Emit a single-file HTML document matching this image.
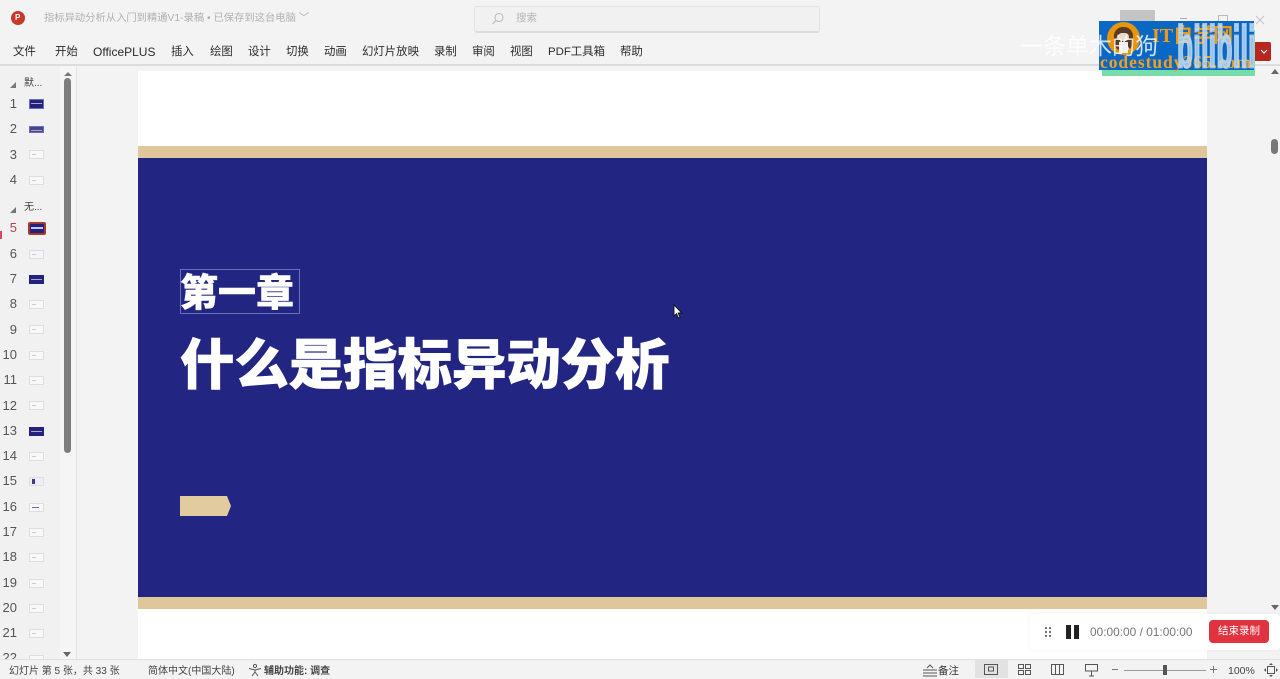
<!DOCTYPE html>
<html lang="zh">
<head>
<meta charset="utf-8">
<style>
html,body{margin:0;padding:0;width:1280px;height:678px;overflow:hidden;background:#f3f3f3;font-family:"Liberation Sans","Noto Sans CJK SC",sans-serif;color:#333}
.a{position:absolute;white-space:nowrap}
.m{position:absolute;top:45px;font-size:11.4px;line-height:15px;color:#2b2b2b;white-space:nowrap}
.n{position:absolute;width:20px;text-align:right;left:-3px;font-size:13px;line-height:16px;color:#555}
.t{position:absolute;left:29px;width:15px;height:9px;background:#f8f8f8;border:1px solid #dedede;box-sizing:border-box}
.d{background:#23237f;border-color:#6c6cc0}
.t i{position:absolute;left:2px;top:3px;width:4px;height:1px;background:#ccc}
.d i{left:1px;width:11px;background:#aab}
.tri{position:absolute;left:10px;width:0;height:0;border-left:6px solid transparent;border-bottom:6px solid #777}
</style>
</head>
<body>
<div class="a" style="left:0;top:0;width:1280px;height:678px;background:#f3f3f3"></div>

<!-- title bar -->
<div class="a" style="left:11px;top:11px;width:14px;height:14px;border-radius:50%;background:#c8392b"></div>
<div class="a" style="left:15px;top:13px;font-size:8px;line-height:10px;font-weight:bold;color:#fff">P</div>
<div class="a" style="left:44px;top:11px;font-size:10.3px;line-height:15px;color:#b0b0b0">指标异动分析从入门到精通V1-录稿 • 已保存到这台电脑 ﹀</div>
<div class="a" style="left:474px;top:6px;width:346px;height:27px;box-sizing:border-box;background:#f1f1f1;border:1px solid #e2e2e2;border-bottom:2px solid #dcdcdc;border-radius:3px"></div>
<svg class="a" style="left:490px;top:11px" width="16" height="16" viewBox="0 0 16 16"><circle cx="9" cy="6.500" r="4" fill="none" stroke="#bbb" stroke-width="1.100"/><path d="M6 9.500L2.500 13" stroke="#bbb" stroke-width="1.200"/></svg>
<div class="a" style="left:516px;top:11px;font-size:10.500px;line-height:15px;color:#b4b4b4">搜索</div>
<div class="a" style="left:1120px;top:10px;width:35px;height:11px;background:#c4c4c4"></div>
<div class="a" style="left:1180px;top:18px;width:7px;height:1px;background:#aaa"></div>
<div class="a" style="left:1218px;top:15px;width:8px;height:7px;border:1px solid #bbb"></div>
<svg class="a" style="left:1254px;top:14px" width="12" height="12" viewBox="0 0 12 12"><path d="M2 2L10 10M10 2L2 10" stroke="#c4c4c4" stroke-width="1"/></svg>

<!-- menu -->
<div class="m" style="left:13px">文件</div>
<div class="m" style="left:55px">开始</div>
<div class="m" style="left:93px;font-size:12px">OfficePLUS</div>
<div class="m" style="left:171px">插入</div>
<div class="m" style="left:210px">绘图</div>
<div class="m" style="left:248px">设计</div>
<div class="m" style="left:286px">切换</div>
<div class="m" style="left:324px">动画</div>
<div class="m" style="left:362px">幻灯片放映</div>
<div class="m" style="left:434px">录制</div>
<div class="m" style="left:472px">审阅</div>
<div class="m" style="left:510px">视图</div>
<div class="m" style="left:548px">PDF工具箱</div>
<div class="m" style="left:620px">帮助</div>
<div class="a" style="left:0;top:64px;width:1280px;height:2px;background:#dcdcdc"></div>

<!-- thumbnail panel -->
<div class="a" style="left:0;top:66px;width:60px;height:593px;background:#f1f1f1"></div>
<div class="a" style="left:60px;top:66px;width:16px;height:593px;background:#f5f5f5"></div>
<div class="a" style="left:76px;top:66px;width:1px;height:593px;background:#e4e4e4"></div>
<div class="a" style="left:64px;top:78px;width:7px;height:375px;border-radius:4px;background:#7d7d7d"></div>
<div class="a" style="left:64px;top:72px;width:0;height:0;border-left:4px solid transparent;border-right:4px solid transparent;border-bottom:4px solid #777"></div>
<div class="a" style="left:63px;top:652px;width:0;height:0;border-left:4px solid transparent;border-right:4px solid transparent;border-top:5px solid #666"></div>

<div class="tri" style="top:82px"></div>
<div class="a" style="left:24px;top:77px;font-size:10px;line-height:14px;color:#444">默...</div>
<div class="tri" style="top:207px"></div>
<div class="a" style="left:24px;top:201px;font-size:10px;line-height:14px;color:#444">无...</div>

<div class="n" style="top:96px">1</div><div class="t d" style="top:99px;height:10px"><i></i></div>
<div class="n" style="top:121px">2</div><div class="t d" style="top:126px;height:7px;background:#45458c"><i></i></div>
<div class="n" style="top:147px">3</div><div class="t" style="top:150px"><i></i></div>
<div class="n" style="top:172px">4</div><div class="t" style="top:176px"><i></i></div>
<div class="n" style="top:220px;color:#b5404a">5</div>
<div class="a" style="left:28px;top:222px;width:18px;height:13px;box-sizing:border-box;border:2px solid #a83a2c;border-radius:2px;background:#23237f"></div>
<div class="a" style="left:31px;top:227px;width:12px;height:2px;background:#c8c8ee"></div>
<div class="a" style="left:0;top:231px;width:2px;height:8px;background:#d84a5a"></div>
<div class="n" style="top:246px">6</div><div class="t" style="top:250px;background:#f4f4fb"><i></i></div>
<div class="n" style="top:271px">7</div><div class="t d" style="top:275px;border-color:#23237f"><i></i></div>
<div class="n" style="top:296px">8</div><div class="t" style="top:300px"><i></i></div>
<div class="n" style="top:322px">9</div><div class="t" style="top:325px"><i></i></div>
<div class="n" style="top:347px">10</div><div class="t" style="top:351px"><i></i></div>
<div class="n" style="top:372px">11</div><div class="t" style="top:376px"><i></i></div>
<div class="n" style="top:398px">12</div><div class="t" style="top:401px"><i></i></div>
<div class="n" style="top:423px">13</div><div class="t d" style="top:427px;border-color:#23237f"><i></i></div>
<div class="n" style="top:448px">14</div><div class="t" style="top:452px"><i></i></div>
<div class="n" style="top:473px">15</div><div class="t" style="top:477px;background:#eeeefa"><i style="background:#3a3a90;width:3px;height:5px;top:1px"></i></div>
<div class="n" style="top:499px">16</div><div class="t" style="top:503px"><i style="background:#6a6ab0;width:7px"></i></div>
<div class="n" style="top:524px">17</div><div class="t" style="top:528px"><i></i></div>
<div class="n" style="top:549px">18</div><div class="t" style="top:553px"><i></i></div>
<div class="n" style="top:575px">19</div><div class="t" style="top:579px"><i></i></div>
<div class="n" style="top:600px">20</div><div class="t" style="top:604px"><i></i></div>
<div class="n" style="top:625px">21</div><div class="t" style="top:629px"><i></i></div>
<div class="a" style="left:0;top:650px;width:60px;height:9px;overflow:hidden"><div class="n" style="top:0">22</div><div class="t" style="top:5px"></div></div>

<!-- slide -->
<div class="a" style="left:138px;top:71px;width:1069px;height:588px;background:#fff"></div>
<div class="a" style="left:138px;top:146px;width:1069px;height:12px;background:#dfc79b"></div>
<div class="a" style="left:138px;top:158px;width:1069px;height:439px;background:#222581"></div>
<div class="a" style="left:138px;top:597px;width:1069px;height:12px;background:#dfc79b"></div>

<div class="a" style="left:180px;top:269px;width:120px;height:45px;box-sizing:border-box;border:1px solid #6d70bd"></div>
<div class="a" style="left:180px;top:263px;font-size:38px;line-height:54px;font-weight:900;-webkit-text-stroke:.4px #fff;color:#fff;font-family:'Noto Sans CJK SC',sans-serif">第一章</div>
<div class="a" style="left:180px;top:321px;font-size:54.400px;line-height:80px;font-weight:900;-webkit-text-stroke:.7px #fff;color:#fff;font-family:'Noto Sans CJK SC',sans-serif">什么是指标异动分析</div>
<svg class="a" style="left:180px;top:496px" width="52" height="21" viewBox="0 0 52 21"><path d="M0 0H47L51 10L47 20H0Z" fill="#e2cb9f"/></svg>

<!-- cursor -->
<svg class="a" style="left:673px;top:304px" width="10" height="16" viewBox="0 0 10 16"><path d="M1 1V12L3.600 9.600L5.400 14L7 13.300L5.200 9H8.600Z" fill="#fff" stroke="#111" stroke-width=".9"/></svg>

<!-- right scrollbar -->
<div class="a" style="left:1207px;top:71px;width:73px;height:588px;background:#f3f3f3"></div>
<div class="a" style="left:1271px;top:69px;width:0;height:0;border-left:4px solid transparent;border-right:4px solid transparent;border-bottom:5px solid #666"></div>
<div class="a" style="left:1271px;top:139px;width:7px;height:15px;border-radius:4px;background:#777"></div>
<div class="a" style="left:1271px;top:605px;width:0;height:0;border-left:4px solid transparent;border-right:4px solid transparent;border-top:5px solid #666"></div>

<!-- recording bar -->
<div class="a" style="left:1030px;top:614px;width:250px;height:36px;background:#fff;border-radius:4px;box-shadow:0 0 5px rgba(0,0,0,.06)"></div>
<div class="a" style="left:1044px;top:626px;width:7px;height:12px;background-image:radial-gradient(circle,#666 1px,transparent 1.200px);background-size:4px 4px"></div>
<div class="a" style="left:1066px;top:625px;width:5px;height:14px;background:#222"></div>
<div class="a" style="left:1074px;top:625px;width:5px;height:14px;background:#222"></div>
<div class="a" style="left:1090px;top:624px;font-size:11.900px;line-height:16px;color:#777">00:00:00 / 01:00:00</div>
<div class="a" style="left:1209px;top:620px;width:60px;height:23px;border-radius:4px;background:#e0323f;color:#fff;font-size:10.500px;line-height:23px;text-align:center">结束录制</div>

<!-- status bar -->
<div class="a" style="left:0;top:659px;width:1280px;height:1px;background:#e0e0e0"></div>
<div class="a" style="left:9px;top:664px;font-size:10px;line-height:15px;color:#444">幻灯片 第 5 张，共 33 张</div>
<div class="a" style="left:148px;top:664px;font-size:10px;line-height:15px;color:#444">简体中文(中国大陆)</div>
<svg class="a" style="left:248px;top:663px" width="14" height="14" viewBox="0 0 14 14"><circle cx="7" cy="3" r="1.600" fill="none" stroke="#555"/><path d="M1 5.500L7 7L13 5.500M7 7V9L4 13M7 9L10 13" fill="none" stroke="#555"/></svg>
<div class="a" style="left:264px;top:664px;font-size:10px;line-height:15px;font-weight:bold;color:#444">辅助功能: 调查</div>
<svg class="a" style="left:923px;top:664px" width="14" height="14" viewBox="0 0 14 14"><path d="M0 6H14M0 9H14M0 12H14M4 4L7 1L10 4" fill="none" stroke="#555"/></svg>
<div class="a" style="left:938px;top:664px;font-size:10.500px;line-height:15px;color:#333">备注</div>
<div class="a" style="left:975px;top:660px;width:33px;height:18px;background:#e2e2e2"></div>
<svg class="a" style="left:984px;top:664px" width="14" height="12" viewBox="0 0 14 12"><rect x=".5" y=".5" width="13" height="10" fill="none" stroke="#555"/><rect x="4.500" y="3" width="5" height="4" fill="none" stroke="#555"/></svg>
<svg class="a" style="left:1018px;top:664px" width="13" height="12" viewBox="0 0 13 12"><rect x=".5" y=".5" width="5" height="4" fill="none" stroke="#555"/><rect x="7.500" y=".5" width="5" height="4" fill="none" stroke="#555"/><rect x=".5" y="6.500" width="5" height="4" fill="none" stroke="#555"/><rect x="7.500" y="6.500" width="5" height="4" fill="none" stroke="#555"/></svg>
<svg class="a" style="left:1051px;top:664px" width="13" height="12" viewBox="0 0 13 12"><rect x=".5" y=".5" width="12" height="10" fill="none" stroke="#555"/><path d="M4.500 1V10M8.500 1V10" stroke="#555"/></svg>
<svg class="a" style="left:1085px;top:664px" width="13" height="13" viewBox="0 0 13 13"><path d="M.5 .5H12.500V7H.5ZM6.500 7V12M4 12H9" fill="none" stroke="#555"/></svg>
<div class="a" style="left:1112px;top:669px;width:6px;height:1px;background:#777"></div>
<div class="a" style="left:1124px;top:670px;width:82px;height:1px;background:#999"></div>
<div class="a" style="left:1163px;top:665px;width:4px;height:10px;background:#555"></div>
<div class="a" style="left:1210px;top:669px;width:7px;height:1px;background:#777"></div>
<div class="a" style="left:1213px;top:666px;width:1px;height:7px;background:#777"></div>
<div class="a" style="left:1228px;top:664px;font-size:10.500px;line-height:15px;color:#444">100%</div>
<svg class="a" style="left:1264px;top:663px" width="14" height="14" viewBox="0 0 14 14"><rect x="3.500" y="3.500" width="7" height="7" fill="none" stroke="#555"/><path d="M7 0L9 2H5ZM7 14L5 12H9ZM0 7L2 5V9ZM14 7L12 9V5Z" fill="#555"/></svg>

<!-- watermark overlay -->
<div class="a" style="left:1246px;top:42px;width:25px;height:19px;background:#b8271f;border-radius:2px"></div>
<svg class="a" style="left:1260px;top:49px" width="8" height="6" viewBox="0 0 8 6"><path d="M1 1L4 4L7 1" fill="none" stroke="#fff" stroke-width="1.200"/></svg>
<div class="a" style="left:1102px;top:30px;width:153px;height:46px;background:#78dca8"></div>
<div class="a" style="left:1099px;top:21px;width:155px;height:49px;background:#0a68c4"></div>
<div class="a" style="left:1107px;top:22px;width:33px;height:33px;border-radius:50%;background:#e8940c"></div>
<div class="a" style="left:1114px;top:27px;width:19px;height:24px;border-radius:9px;background:#5a3a22"></div>
<div class="a" style="left:1118px;top:33px;width:11px;height:8px;border-radius:4px;background:#e8dcc8"></div>
<div class="a" style="left:1119px;top:42px;width:9px;height:11px;background:#eee"></div>
<div class="a" style="left:1152px;top:23px;font-size:20px;line-height:26px;font-weight:bold;color:#f09a14;font-family:'Liberation Serif','Noto Sans CJK SC',serif">IT自学网</div>
<div class="a" style="left:1020px;top:30px;font-size:23px;line-height:32px;color:rgba(255,255,255,.8)">一条单木的狗</div>
<div class="a" style="left:1100px;top:51px;font-size:17.500px;line-height:22px;font-weight:bold;letter-spacing:.95px;color:#f2a01e;font-family:'Liberation Serif',serif">codestudy365.com</div>
<div class="a" style="left:1177px;top:19px;font-size:58px;line-height:58px;font-weight:bold;letter-spacing:1px;-webkit-text-stroke:3px rgba(190,218,240,.8);color:rgba(190,218,240,.8);transform:scaleX(.45);transform-origin:left top">bilibili</div>
</body>
</html>
